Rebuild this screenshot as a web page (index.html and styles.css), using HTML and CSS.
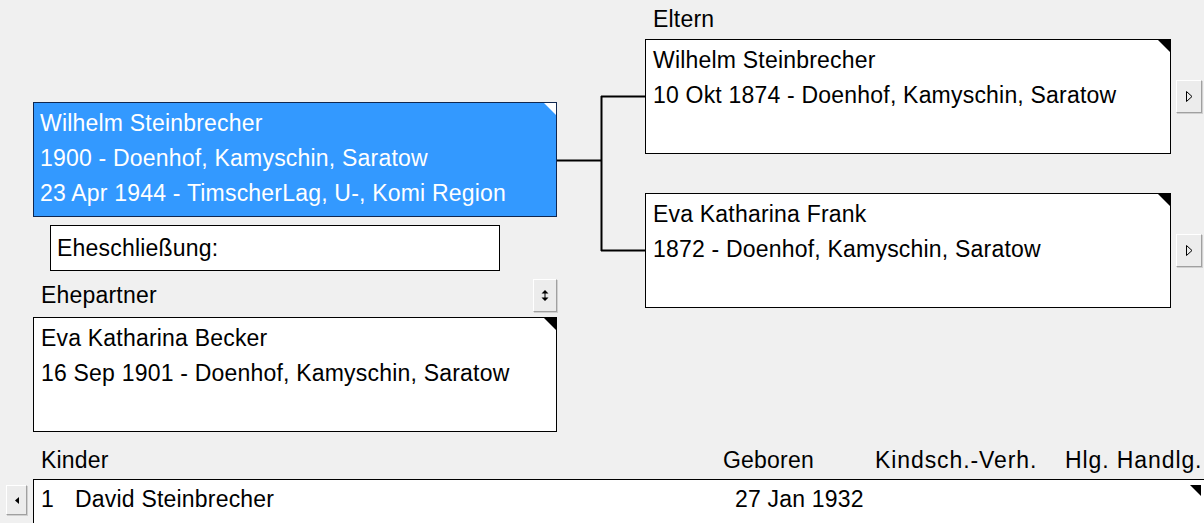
FILE: index.html
```html
<!DOCTYPE html>
<html lang="de">

<head>
    <meta charset="UTF-8">
    <title>Familienansicht</title>
    <link rel="stylesheet" href="styles.css">
</head>

<body>
    <div class="top">
        <div class="left">
            <div class="person selected">
                <div>Wilhelm Steinbrecher</div>
                <div>1900 - Doenhof, Kamyschin, Saratow</div>
                <div>23 Apr 1944 - TimscherLag, U-, Komi Region</div>
            </div>
            <div class="marriage">Eheschließung:</div>
            <div class="spouse-head">
                <span class="label">Ehepartner</span>
                <button class="btn btn-sort">
                    <svg width="8" height="11" viewBox="0 0 8 11"><path d="M4 0 L7.5 3.5 H0.5 Z M4 11 L7.5 7.5 H0.5 Z" fill="#000"/><rect x="3.5" y="3" width="1" height="5" fill="#000"/></svg>
                </button>
            </div>
            <div class="person">
                <div>Eva Katharina Becker</div>
                <div>16 Sep 1901 - Doenhof, Kamyschin, Saratow</div>
            </div>
        </div>

        <svg class="connector" width="88" height="310" viewBox="0 0 88 310">
            <path d="M0 160.5 H44.5 M44.5 96 V251 M44 96.5 H88 M44 250.5 H88" stroke="#000" stroke-width="2" fill="none"/>
        </svg>

        <div class="right">
            <div class="label parents-label">Eltern</div>
            <div class="parent-row">
                <div class="person">
                    <div>Wilhelm Steinbrecher</div>
                    <div>10 Okt 1874 - Doenhof, Kamyschin, Saratow</div>
                </div>
                <button class="btn btn-nav">
                    <svg width="7" height="11" viewBox="0 0 7 11"><path d="M0.5 0.5 L6 5.5 L0.5 10.5 Z" fill="none" stroke="#000"/></svg>
                </button>
            </div>
            <div class="parent-row second">
                <div class="person">
                    <div>Eva Katharina Frank</div>
                    <div>1872 - Doenhof, Kamyschin, Saratow</div>
                </div>
                <button class="btn btn-nav">
                    <svg width="7" height="11" viewBox="0 0 7 11"><path d="M0.5 0.5 L6 5.5 L0.5 10.5 Z" fill="none" stroke="#000"/></svg>
                </button>
            </div>
        </div>
    </div>

    <div class="children-head">
        <span class="col-name">Kinder</span>
        <span class="col-born">Geboren</span>
        <span class="col-rel">Kindsch.-Verh.</span>
        <span class="col-ord">Hlg. Handlg.</span>
    </div>

    <div class="children">
        <button class="btn btn-back">
            <svg width="4" height="7" viewBox="0 0 4 7"><path d="M4 0 L0 3.5 L4 7 Z" fill="#000"/></svg>
        </button>
        <div class="child-list">
            <div class="child-row">
                <span class="child-num">1</span>
                <span class="child-name">David Steinbrecher</span>
                <span class="child-born">27 Jan 1932</span>
            </div>
        </div>
    </div>
</body>

</html>
```

FILE: styles.css
```css
body {
    margin: 0;
    background: #f0f0f0;
    font-family: "Liberation Sans", Arial, sans-serif;
    font-size: 23px;
    letter-spacing: 0.2px;
    color: #000;
    width: 1204px;
    height: 523px;
    overflow: hidden;
}

.top {
    display: flex;
    height: 440px;
}

.left {
    margin-left: 33px;
    width: 524px;
    padding-top: 102px;
}

.person {
    position: relative;
    box-sizing: border-box;
    height: 115px;
    background: white;
    border: 1px solid #000;
    padding: 3px 0 0 7px;
    line-height: 35px;
    white-space: nowrap;
}

/* little corner flag on each card */
.person::after {
    content: "";
    position: absolute;
    top: 0;
    right: 0;
    border-top: 12px solid #000;
    border-left: 12px solid transparent;
}

.person.selected {
    background: #3399ff;
    color: white;
    border-color: #0f2750;
    padding-left: 6px;
}

.person.selected::after {
    border-top-color: white;
}

.marriage {
    box-sizing: border-box;
    margin: 8px 0 0 17px;
    width: 450px;
    height: 46px;
    background: white;
    border: 1px solid #000;
    padding-left: 6px;
    line-height: 44px;
}

.spouse-head {
    display: flex;
    justify-content: space-between;
    align-items: center;
    margin-top: 8px;
    height: 33px;
    margin-bottom: 5px;
}

.label {
    padding-left: 8px;
}

.btn {
    display: flex;
    align-items: center;
    justify-content: center;
    box-sizing: border-box;
    padding: 0;
    background: #ececec;
    border: 1px solid;
    border-color: #ffffff #a0a0a0 #a0a0a0 #ffffff;
    box-shadow: 1px 1px 0 #d0d0d0;
}

.btn-sort {
    width: 24px;
    height: 33px;
}

.connector {
    flex: none;
}

.right {
    width: 559px;
}

.parents-label {
    height: 39px;
    line-height: 38px;
}

.parent-row {
    display: flex;
    align-items: center;
}

.parent-row .person {
    width: 526px;
}

.parent-row.second {
    margin-top: 39px;
}

.btn-nav {
    margin-left: 5px;
    width: 26px;
    height: 33px;
}

.children-head {
    display: grid;
    grid-template-columns: 682px 152px 190px 1fr;
    margin-left: 33px;
    padding-left: 8px;
    height: 39px;
    line-height: 40px;
    white-space: nowrap;
}

.col-rel,
.col-ord {
    letter-spacing: 0.9px;
}

.children {
    display: flex;
    align-items: flex-start;
}

.btn-back {
    margin: 6px 6px 0 6px;
    width: 21px;
    height: 30px;
}

.child-list {
    position: relative;
    flex: 1;
    height: 60px;
    background: white;
    border-top: 1px solid #000;
    border-left: 1px solid #000;
}

.child-list::after {
    content: "";
    position: absolute;
    top: 5px;
    right: 3px;
    border-top: 11px solid #000;
    border-left: 11px solid transparent;
}

.child-row {
    display: grid;
    grid-template-columns: 34px 660px 1fr;
    padding-left: 7px;
    line-height: 38px;
}
```
